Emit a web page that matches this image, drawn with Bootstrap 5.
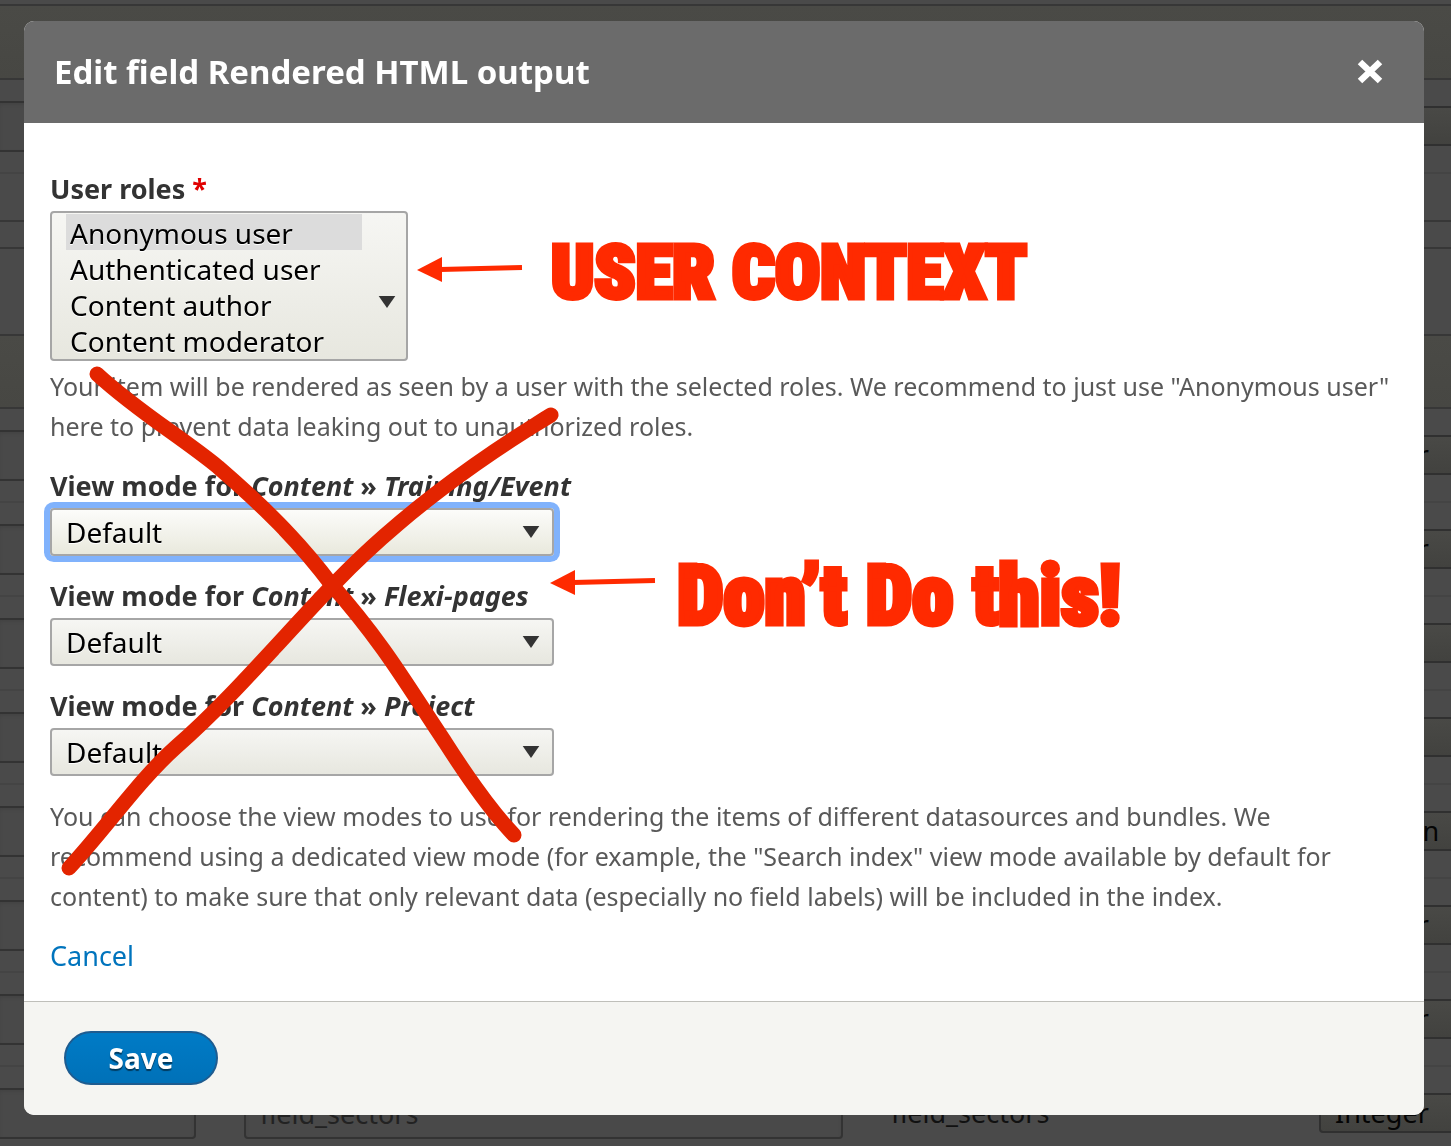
<!DOCTYPE html>
<html lang="en">
<head>
<meta charset="utf-8">
<meta name="viewport" content="width=device-width, initial-scale=1">
<title>Edit field Rendered HTML output</title>
<link href="https://cdn.jsdelivr.net/npm/bootstrap@5.3.0/dist/css/bootstrap.min.css" rel="stylesheet">
<style>
:root { --ui-font: "Lucida Grande", "Noto Sans", "Open Sans", sans-serif; --arrow: url("data:image/svg+xml,%3Csvg xmlns='http://www.w3.org/2000/svg' viewBox='0 0 18 13'%3E%3Cpath fill='%23333' d='M0 0h18L9 13z'/%3E%3C/svg%3E"); }
body { font-family: var(--ui-font); background: #4a4a4a; color: #333; overflow-x: hidden; }

/* dimmed page behind the dialog */
.backpage { position: fixed; inset: 0; overflow: hidden; z-index: 0; background: #4a4a4a; color: #111; font-size: 27px; }
.strip { border-bottom: 2px solid #373737; }
.strip-olive { background: linear-gradient(#4a4a46, #474743); }
.field-row { height: 94px; border-bottom: 2px solid #444; display: grid; grid-template-columns: 196px 599px 380px 180px; column-gap: 48px; align-items: center; }
.field-row input { height: 51px; width: 100%; min-width: 0; background: #494949; border: 2px solid #333; border-radius: 4px; padding: 0 14px; color: #222; box-shadow: inset 0 2px 3px #444; }
.field-row input.edge { border-left: 0; border-radius: 0 4px 4px 0; }
.field-row select { height: 40px; border: 2px solid #303030; border-radius: 4px; background: linear-gradient(#494946, #42423f); padding: 0 14px; color: #050505; appearance: none; font-size: 27px; line-height: 36px; width: 100%; }

/* dialog */
.dialog-box { position: relative; z-index: 1; margin: 21px 27px 31px 24px; border-radius: 10px; background: #fff; overflow: hidden; }
.dialog-head { height: 102px; background: #6b6b6b; padding: 0 38px 0 30px; }
.dialog-head h1 { font-size: 33px; line-height: 40px; font-weight: 700; color: #fff; }
.closer { width: 32px; height: 32px; }
.dialog-main { padding: 46px 26px 25px; }
.field-label { display: block; font-size: 27px; line-height: 40px; font-weight: 700; margin-bottom: 2px; }
.star { color: #e00000; }
.pick, .picklist { display: block; border: 2px solid #a6a6a6; border-radius: 4px; color: #000; font-size: 28px; appearance: none; text-shadow: 0 1px #fff; background: var(--arrow) right 12px center / 18px 12px no-repeat, linear-gradient(#f6f6f3, #e7e7df); }
.pick { width: 504px; max-width: 100%; height: 48px; padding: 0 40px 0 14px; line-height: 40px; }
.pick.is-active { box-shadow: 0 0 0 6px #80b2fc; background: var(--arrow) right 12px center / 18px 12px no-repeat, linear-gradient(#fcfcfa, #e9e9dd); }
.picklist { width: 358px; height: 150px; padding: 1px 44px 1px 14px; overflow: hidden; background-position: right 10px top 83px, 0 0; }
.picklist option { height: 36px; line-height: 32px; padding: 0 4px; }
.picklist option:checked { background: #dcdcdc linear-gradient(#dcdcdc, #dcdcdc); color: #000; }
.item { margin-bottom: 20px; }
.hint { font-size: 25px; line-height: 40px; color: #595959; }
.hint.after-list { margin-top: 5px; }
.cancel { font-size: 27px; line-height: 40px; color: #0074bd; text-decoration: none; }
.dialog-foot { border-top: 1px solid #bfbfba; background: #f5f5f2; padding: 29px 40px 30px; }
.save { width: 154px; height: 54px; padding: 0; border: 2px solid #1e5c90; border-radius: 27px; background: linear-gradient(#007bc6, #0071b8); color: #fff; font-size: 28px; font-weight: 700; text-shadow: 0 2px 1px rgba(0,0,0,.5); }

/* hand-drawn notes lying over the form */
.notes { position: absolute; left: 0; top: 0; width: 1400px; height: 1094px; z-index: 2; pointer-events: none; }
.notes text { font-family: Impact, "Roboto Condensed", Roboto, sans-serif; font-weight: 900; fill: #ff2a00; stroke: #ff2a00; stroke-width: 5px; }
</style>
</head>
<body>
<div class="backpage" aria-hidden="true">
  <div class="strip" style="height:6px"></div>
  <div class="strip strip-olive" style="height:74px"></div>
  <div class="field-row"><input class="edge" tabindex="-1"><input value="rendered_item" tabindex="-1"><span>rendered_item</span><select tabindex="-1"><option></option></select></div>
  <div class="strip" style="height:48px"></div>
  <div class="strip" style="height:27px"></div>
  <div class="strip" style="height:87px"></div>
  <div class="strip strip-olive" style="height:73px"></div>
  <div class="field-row"><input class="edge" tabindex="-1"><input tabindex="-1"><span></span><select tabindex="-1"><option>Integer</option></select></div>
  <div class="field-row"><input class="edge" tabindex="-1"><input tabindex="-1"><span></span><select tabindex="-1"><option>Integer</option></select></div>
  <div class="field-row"><input class="edge" tabindex="-1"><input tabindex="-1"><span></span><select tabindex="-1"><option>Date</option></select></div>
  <div class="field-row"><input class="edge" tabindex="-1"><input tabindex="-1"><span></span><select tabindex="-1"><option>Date</option></select></div>
  <div class="field-row"><input class="edge" tabindex="-1"><input tabindex="-1"><span></span><select tabindex="-1"><option>Boolean</option></select></div>
  <div class="field-row"><input class="edge" tabindex="-1"><input tabindex="-1"><span></span><select tabindex="-1"><option>Integer</option></select></div>
  <div class="field-row"><input class="edge" tabindex="-1"><input tabindex="-1"><span></span><select tabindex="-1"><option>Integer</option></select></div>
  <div class="field-row"><input class="edge" tabindex="-1"><input value="field_sectors" tabindex="-1"><span>field_sectors</span><select tabindex="-1"><option>Integer</option></select></div>
</div>

<div class="dialog-box" role="dialog" aria-labelledby="dlgTitle">
  <header class="dialog-head d-flex align-items-center justify-content-between">
    <h1 class="m-0" id="dlgTitle">Edit field Rendered HTML output</h1>
    <button type="button" class="closer btn p-0 border-0 d-flex align-items-center justify-content-center" aria-label="Close">
      <svg width="28" height="28" viewBox="0 0 28 28"><path d="M4 4l20 19M24 4L4 23" stroke="#fff" stroke-width="6.500"/></svg>
    </button>
  </header>
  <form>
    <div class="dialog-main">
      <label class="field-label" for="roles">User roles <span class="star">*</span></label>
      <select class="picklist" id="roles" multiple size="4">
        <option selected>Anonymous user</option>
        <option>Authenticated user</option>
        <option>Content author</option>
        <option>Content moderator</option>
      </select>
      <p class="hint after-list item">Your item will be rendered as seen by a user with the selected roles. We recommend to just use "Anonymous user" here to prevent data leaking out to unauthorized roles.</p>
      <div class="item">
        <label class="field-label" for="vm1">View mode for <em>Content</em> » <em>Training/Event</em></label>
        <select class="pick is-active" id="vm1"><option>Default</option></select>
      </div>
      <div class="item">
        <label class="field-label" for="vm2">View mode for <em>Content</em> » <em>Flexi-pages</em></label>
        <select class="pick" id="vm2"><option>Default</option></select>
      </div>
      <div class="item">
        <label class="field-label" for="vm3">View mode for <em>Content</em> » <em>Project</em></label>
        <select class="pick" id="vm3"><option>Default</option></select>
      </div>
      <p class="hint item">You can choose the view modes to use for rendering the items of different datasources and bundles. We recommend using a dedicated view mode (for example, the "Search index" view mode available by default for content) to make sure that only relevant data (especially no field labels) will be included in the index.</p>
      <div class="d-flex"><a class="cancel" href="#">Cancel</a></div>
    </div>
    <footer class="dialog-foot"><button type="button" class="save d-block">Save</button></footer>
  </form>
  <svg class="notes" viewBox="24 21 1400 1094">
    <g fill="none" stroke="#e32400" stroke-width="15" stroke-linecap="round" stroke-linejoin="round">
      <path d="M97 374C137 411 180 436 218 467C262 505 298 540 331 584C385 645 410 690 445 742C468 778 490 810 514 835"/>
      <path d="M551 415C500 446 410 505 335 583C280 640 230 700 176 747C139 780 106 828 69 868"/>
    </g>
    <g fill="#ff2a00">
      <path d="M417 270L442 257V282z"/><path d="M440 269.500L522 267.500" stroke="#ff2a00" stroke-width="5"/>
      <path d="M550 583L575 570V595z"/><path d="M573 582.500L655 580.500" stroke="#ff2a00" stroke-width="5"/>
    </g>
    <text x="551" y="298" font-size="75">USER CONTEXT</text>
    <text x="677" y="624" font-size="83">Don’t Do this!</text>
  </svg>
</div>
<script src="https://cdn.jsdelivr.net/npm/bootstrap@5.3.0/dist/js/bootstrap.bundle.min.js"></script>
</body>
</html>
